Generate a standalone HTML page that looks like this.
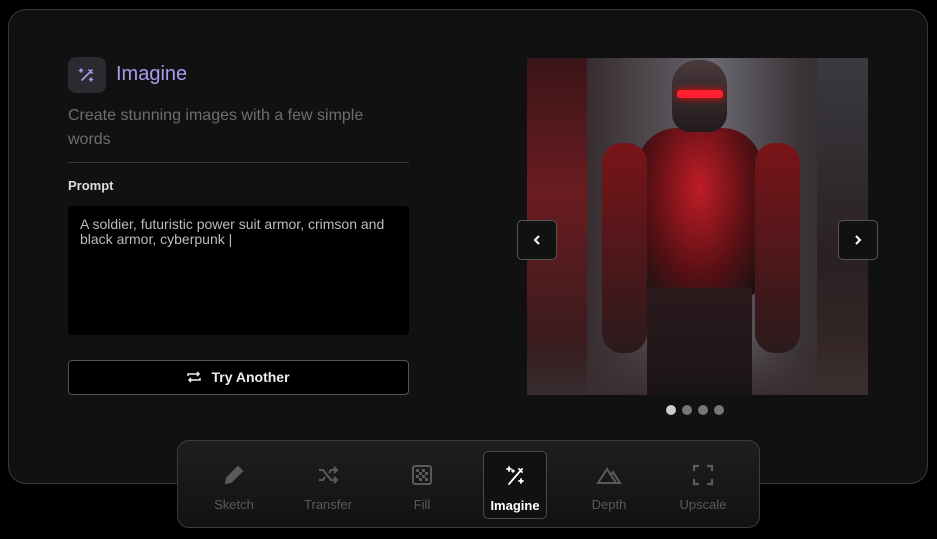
<!DOCTYPE html>
<html><head><style>
*{margin:0;padding:0;box-sizing:border-box}
body{width:937px;height:539px;background:#000;font-family:"Liberation Sans",sans-serif;position:relative;overflow:hidden}
.card{position:absolute;left:8px;top:9px;width:920px;height:475px;border:1px solid #3a3a3a;border-radius:18px;background:#111}
.abs{position:absolute}
.tb{position:absolute;left:177px;top:440px;width:583px;height:88px;border:1px solid #3c3c3c;border-radius:12px;background:linear-gradient(#1e1e1e,#121212)}
.it{position:absolute;top:10px;width:64px;height:68px;text-align:center;color:#5a5a5a;font-size:13px}
.it svg{display:block;margin:12px auto 0}
.it span{position:absolute;left:0;right:0;top:46px}
.btn{position:absolute;width:40px;height:40px;border:1px solid #555;border-radius:5px;background:#111;color:#fff}
</style></head><body>
<div class="card"></div>
<div class="abs" style="left:68px;top:57px;width:38px;height:36px;border-radius:8px;background:#2a2a30"></div>
<svg class="abs" style="left:77px;top:65px" width="20" height="20" viewBox="0 0 20 20" fill="none" stroke="#a99cf0" stroke-width="1.6" stroke-linecap="round"><path d="M5 15L15 5M12 5l3 3M4 4v3M2.5 5.5h3M14 13v3M12.5 14.5h3"/></svg>
<div class="abs" style="left:116px;top:63px;font-size:20px;color:#a99cf0">Imagine</div>
<div class="abs" style="left:68px;top:104px;width:340px;font-size:16px;line-height:24px;color:#6e6e6e">Create stunning images with a few simple words</div>
<div class="abs" style="left:68px;top:162px;width:341px;height:1px;background:#3a3a3a"></div>
<div class="abs" style="left:68px;top:178px;font-size:13px;font-weight:bold;color:#ddd">Prompt</div>
<div class="abs" style="left:68px;top:206px;width:341px;height:129px;background:#000;border-radius:4px;padding:11px 12px;font-size:14px;line-height:15px;color:#bbb">A soldier, futuristic power suit armor, crimson and black armor, cyberpunk |</div>
<div class="abs" style="left:68px;top:360px;width:341px;height:35px;border:1px solid #555;border-radius:4px;background:#000;color:#eee;font-size:14px;font-weight:bold;text-align:center;line-height:33px"><svg width="14" height="12" viewBox="0 0 14 12" fill="none" stroke="#eee" stroke-width="1.5" style="vertical-align:-1px;margin-right:10px"><path d="M1 5V3h11M10 1l2 2-2 2M13 7v2H2M4 11L2 9l2-2"/></svg>Try Another</div>
<div class="abs" style="left:527px;top:58px;width:341px;height:337px;overflow:hidden;background:linear-gradient(90deg,#2a1c1e 0%,#3a3034 20%,#5a565c 45%,#6a6870 55%,#3b3438 80%,#2a2226 100%)">
<div class="abs" style="left:0;top:0;width:60px;height:337px;background:linear-gradient(#3a1518,#6a1c20 40%,#2a1a1c)"></div>
<div class="abs" style="left:290px;top:0;width:51px;height:337px;background:linear-gradient(#3a3a40,#2a2022 60%,#3a2a2a)"></div>
<div class="abs" style="left:0;top:280px;width:341px;height:57px;background:linear-gradient(rgba(40,30,32,0),#3a2e30)"></div>
<div class="abs" style="left:110px;top:70px;width:125px;height:170px;border-radius:40px 40px 20px 20px;background:radial-gradient(ellipse at 50% 35%,#c01c26,#5a1014 55%,#1a1214 90%)"></div>
<div class="abs" style="left:145px;top:2px;width:55px;height:72px;border-radius:25px 25px 18px 18px;background:linear-gradient(#4a3a3c,#221a1c)"></div>
<div class="abs" style="left:150px;top:32px;width:46px;height:8px;background:#ff2030;border-radius:3px;box-shadow:0 0 8px #f00"></div>
<div class="abs" style="left:75px;top:85px;width:45px;height:210px;border-radius:20px;background:linear-gradient(#7a1418,#2a1a1c)"></div>
<div class="abs" style="left:228px;top:85px;width:45px;height:210px;border-radius:20px;background:linear-gradient(#7a1418,#2a1a1c)"></div>
<div class="abs" style="left:120px;top:230px;width:105px;height:107px;background:linear-gradient(#2a1a1c,#1a1416)"></div>
</div>
<div class="btn" style="left:517px;top:220px"><svg width="38" height="38" viewBox="0 0 38 38" fill="none" stroke="#fff" stroke-width="2"><path d="M21 15l-4 4 4 4"/></svg></div>
<div class="btn" style="left:838px;top:220px"><svg width="38" height="38" viewBox="0 0 38 38" fill="none" stroke="#fff" stroke-width="2"><path d="M17 15l4 4-4 4"/></svg></div>
<div class="abs" style="left:666px;top:405px;width:10px;height:10px;border-radius:50%;background:#ccc"></div>
<div class="abs" style="left:682px;top:405px;width:10px;height:10px;border-radius:50%;background:#777"></div>
<div class="abs" style="left:698px;top:405px;width:10px;height:10px;border-radius:50%;background:#777"></div>
<div class="abs" style="left:714px;top:405px;width:10px;height:10px;border-radius:50%;background:#777"></div>
<div class="tb">
<div class="it" style="left:24px"><svg width="24" height="24" viewBox="0 0 24 24" fill="#5a5a5a" stroke="#5a5a5a" stroke-width="2"><path d="M4 20l1-5L16 4l4 4L9 19z"/></svg><span>Sketch</span></div>
<div class="it" style="left:118px"><svg width="24" height="24" viewBox="0 0 24 24" fill="none" stroke="#5a5a5a" stroke-width="2"><path d="M3 7h4l8 10h5M3 17h4l2-3M13 10l2-3h5M18 4l3 3-3 3M18 14l3 3-3 3"/></svg><span>Transfer</span></div>
<div class="it" style="left:212px"><svg width="24" height="24" viewBox="0 0 24 24"><rect x="3" y="3" width="18" height="18" rx="2" fill="none" stroke="#5a5a5a" stroke-width="2"/><path fill="#5a5a5a" d="M6 6h3v3H6zM12 6h3v3h-3zM9 9h3v3H9zM15 9h3v3h-3zM6 12h3v3H6zM12 12h3v3h-3zM9 15h3v3H9zM15 15h3v3h-3z"/></svg><span>Fill</span></div>
<div class="it" style="left:305px;border:1px solid #4a4a4a;border-radius:5px;background:#111;color:#fff"><svg width="24" height="24" viewBox="0 0 24 24" fill="none" stroke="#fff" stroke-width="1.8" stroke-linecap="round"><path d="M6 20L19 5M16 5l3 3M6 3v4M4 5h4M18 15v4M16 17h4M10 6v2M9 7h2"/></svg><span style="font-weight:bold">Imagine</span></div>
<div class="it" style="left:399px"><svg width="26" height="24" viewBox="0 0 26 24" fill="none" stroke="#5a5a5a" stroke-width="2"><path d="M2 20L11 6l9 14zM15 12l2-3 7 11h-4"/></svg><span>Depth</span></div>
<div class="it" style="left:493px"><svg width="24" height="24" viewBox="0 0 24 24" fill="none" stroke="#5a5a5a" stroke-width="2.2"><path d="M3 8V3h5M16 3h5v5M21 16v5h-5M8 21H3v-5"/></svg><span>Upscale</span></div>
</div>
</body></html>
